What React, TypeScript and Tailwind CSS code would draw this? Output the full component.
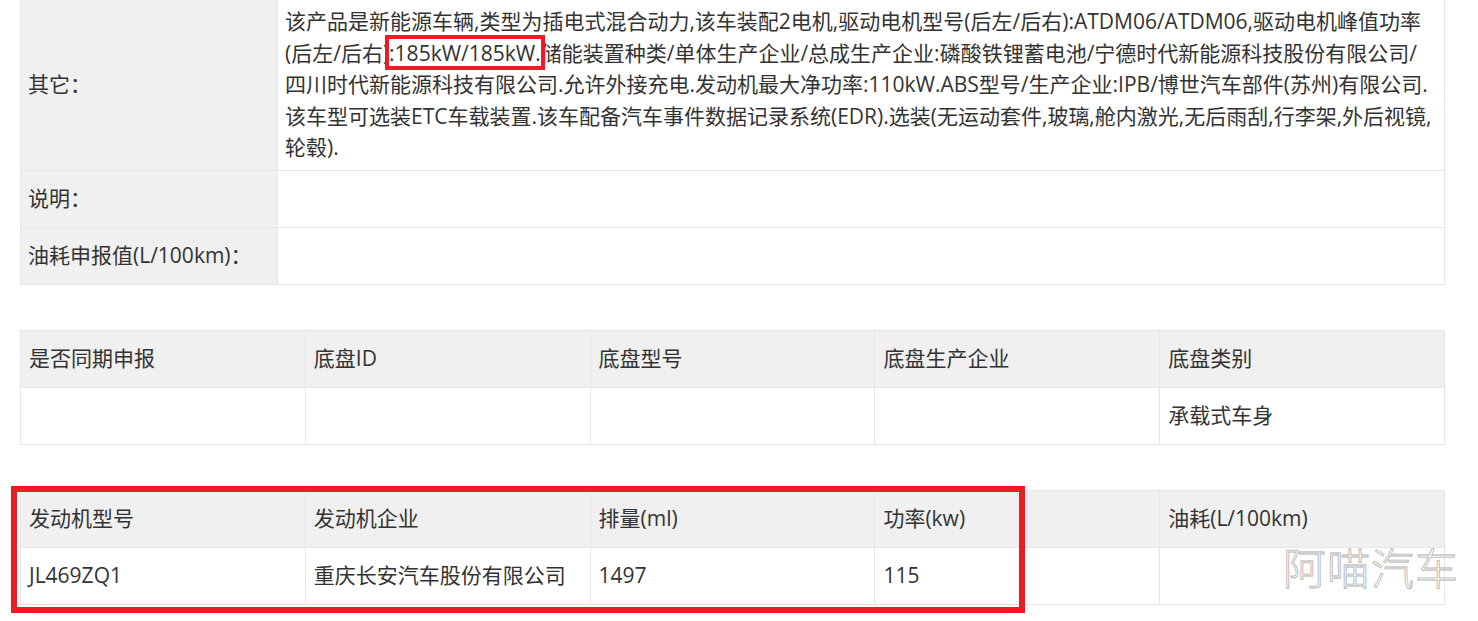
const font = { fontFamily: '"Open Sans", "Noto Sans CJK SC", sans-serif' }

const chassisHead = ['是否同期申报', '底盘ID', '底盘型号', '底盘生产企业', '底盘类别']
const chassisBody = ['', '', '', '', '承载式车身']
const engineHead = ['发动机型号', '发动机企业', '排量(ml)', '功率(kw)', '油耗(L/100km)']
const engineBody = ['JL469ZQ1', '重庆长安汽车股份有限公司', '1497', '115', '']

function GridTable({ head, body }: { head: string[]; body: string[] }) {
  return (
    <div className="ml-[20px] w-[1425px] grid grid-cols-5 border-l border-t border-[#e6e6e6]">
      {head.map((h, i) => (
        <div key={'h' + i} className="h-[57px] flex items-center pl-[8px] bg-[#f0f0f0] border-r border-b border-[#e6e6e6]">
          {h}
        </div>
      ))}
      {body.map((b, i) => (
        <div key={'b' + i} className="h-[57px] flex items-center pl-[8px] bg-white border-r border-b border-[#e6e6e6]">
          {b}
        </div>
      ))}
    </div>
  )
}

export default function App() {
  return (
    <div className="w-[1478px] h-[621px] bg-white text-[#333] text-[21px] overflow-hidden relative" style={font}>
      {/* 参数表 */}
      <div className="ml-[20px] w-[1425px] border-l border-r border-[#e6e6e6]">
        <div className="flex h-[171px] border-b border-[#e6e6e6]">
          <div className="w-[257px] shrink-0 bg-[#f0f0f0] border-r border-[#e6e6e6] flex items-center pl-[7px]">其它：</div>
          <div className="flex-1 pl-[7px] pt-[6px] leading-[31.5px] whitespace-nowrap">
            <div>该产品是新能源车辆,类型为插电式混合动力,该车装配2电机,驱动电机型号(后左/后右):ATDM06/ATDM06,驱动电机峰值功率</div>
            <div>
              (后左/后右)
              <span className="relative">
                :185kW/185kW.
                <span className="absolute -top-[4px] -bottom-[3px] -left-[4px] -right-[4px] border-4 border-[#ed1c24]" />
              </span>
              储能装置种类/单体生产企业/总成生产企业:磷酸铁锂蓄电池/宁德时代新能源科技股份有限公司/
            </div>
            <div>四川时代新能源科技有限公司.允许外接充电.发动机最大净功率:110kW.ABS型号/生产企业:IPB/博世汽车部件(苏州)有限公司.</div>
            <div>该车型可选装ETC车载装置.该车配备汽车事件数据记录系统(EDR).选装(无运动套件,玻璃,舱内激光,无后雨刮,行李架,外后视镜,</div>
            <div>轮毂).</div>
          </div>
        </div>
        <div className="flex h-[57px] border-b border-[#e6e6e6]">
          <div className="w-[257px] shrink-0 bg-[#f0f0f0] border-r border-[#e6e6e6] flex items-center pl-[7px]">说明：</div>
          <div className="flex-1" />
        </div>
        <div className="flex h-[57px] border-b border-[#e6e6e6]">
          <div className="w-[257px] shrink-0 bg-[#f0f0f0] border-r border-[#e6e6e6] flex items-center pl-[7px]">油耗申报值(L/100km)：</div>
          <div className="flex-1" />
        </div>
      </div>

      <div className="mt-[45px]">
        <GridTable head={chassisHead} body={chassisBody} />
      </div>

      <div className="mt-[45px] relative">
        <GridTable head={engineHead} body={engineBody} />
        <div className="absolute left-[11px] top-[-4px] w-[1014px] h-[127px] border-[6px] border-[#ed1c24]" />
      </div>

      {/* 水印 */}
      <div className="absolute left-[1283px] top-[547px] text-[43px] leading-none tracking-[1px] text-white font-light [-webkit-text-stroke:0.8px_#b0b0b0]">
        阿喵汽车
      </div>
    </div>
  )
}
